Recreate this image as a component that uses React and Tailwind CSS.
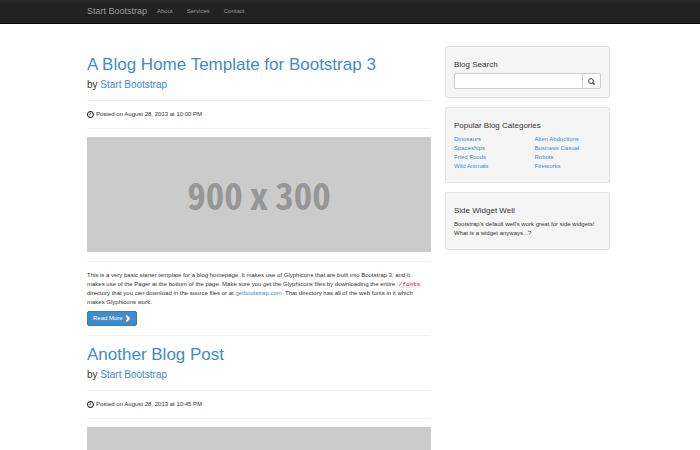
import React from "react";

const categories = [
  ["Dinosaurs", "Spaceships", "Fried Foods", "Wild Animals"],
  ["Alien Abductions", "Business Casual", "Robots", "Fireworks"],
];

function ClockIcon() {
  return (
    <svg viewBox="0 0 14 14" className="mr-0.5 size-[7px] shrink-0 fill-none stroke-[#222]" aria-hidden="true">
      <circle cx="7" cy="7" r="5.9" strokeWidth="2.1" />
      <path d="M7.2 3v4.4H4.4" strokeWidth="1.4" />
    </svg>
  );
}

function SearchIcon() {
  return (
    <svg viewBox="0 0 14 14" className="size-[7px] fill-none stroke-[#333]" aria-hidden="true">
      <circle cx="6" cy="6" r="4.8" strokeWidth="1.9" />
      <path d="M9.4 9.4l3.8 3.8" strokeWidth="2.6" />
    </svg>
  );
}

function ChevronIcon() {
  return (
    <svg viewBox="0 0 14 14" className="size-[7px] fill-white" aria-hidden="true">
      <path d="M3.2 2.8L5.8.2 12.4 7l-6.6 6.8-2.6-2.6L7.2 7z" />
    </svg>
  );
}

function Rule() {
  return <hr className="border-t border-[#f1f1f1]" />;
}

function Post({ title, time, children }) {
  return (
    <article>
      <h1 className="text-[17px] leading-[18px] text-[#428bca]">
        <a href="#post">{title}</a>
      </h1>
      <p className="mt-1 mb-[9px] text-[10px] leading-[13px]">
        by <a href="#author" className="text-[#428bca]">Start Bootstrap</a>
      </p>
      <Rule />
      <p className="my-[9px] flex items-center leading-[9px]">
        <ClockIcon />
        Posted on August 28, 2013 at {time}
      </p>
      <Rule />
      {children}
    </article>
  );
}

function Well({ title, className, children }) {
  return (
    <section className={`rounded-xs border border-[#e3e3e3] bg-[#f5f5f5] px-2 ${className}`}>
      <h4 className="text-[8px] leading-[9px]">{title}</h4>
      {children}
    </section>
  );
}

export default function App() {
  return (
    <div className="min-h-screen bg-white font-['Liberation_Sans',Arial,sans-serif] text-[6px] leading-[9px] text-[#333]">
      <nav className="border-b border-[#080808] bg-linear-to-b from-[#2c2c2c] to-[#222] to-20% pr-[3px] text-[#999]">
        <div className="mx-auto flex h-[23px] max-w-[523px] items-center">
          <a href="#home" className="mr-[10px] text-[9px]">Start Bootstrap</a>
          <div className="flex gap-[14px]">
            <a href="#about">About</a>
            <a href="#services">Services</a>
            <a href="#contact">Contact</a>
          </div>
        </div>
      </nav>
      <div className="pr-[3px]">
        <div className="mx-auto grid max-w-[523px] grid-cols-[344fr_165fr] items-start gap-[14px] pt-[22px]">
          <main className="min-w-0 pt-[10px]">
            <Post title="A Blog Home Template for Bootstrap 3" time="10:00 PM">
              <div className="mt-2 mb-[9px] flex aspect-[3/1] items-center justify-center gap-[7px] bg-[#cbcbcb] font-['Noto_Sans_CJK_JP',sans-serif] text-[37px] font-bold leading-none text-[#969696] [font-feature-settings:'hwid']">
                <span>900</span>
                <span>x</span>
                <span>300</span>
              </div>
              <Rule />
              <p className="mt-[9px] mb-1">
                This is a very basic starter template for a blog homepage. It makes use of Glyphicons that are built into Bootstrap 3, and it<br />
                makes use of the Pager at the bottom of the page. Make sure you get the Glyphicons files by downloading the entire{" "}
                <code className="rounded-xs bg-[#f9f2f4] px-0.5 font-['Liberation_Mono',monospace] text-[#c7254e]">/fonts</code><br />
                directory that you can download in the source files or at{" "}
                <a href="#bootstrap" className="text-[#428bca]">getbootstrap.com</a>. That directory has all of the web fonts in it which<br />
                makes Glyphicons work.
              </p>
              <button type="button" className="mb-[9px] flex h-[15px] items-center gap-px rounded-xs border border-[#357ebd] bg-[#428bca] px-[5px] text-white">
                Read More <ChevronIcon />
              </button>
              <Rule />
            </Post>
            <div className="pt-[10px]">
              <Post title="Another Blog Post" time="10:45 PM">
                <div className="mt-2 h-[23px] bg-[#cbcbcb]" />
              </Post>
            </div>
          </main>
          <aside className="flex min-w-0 flex-col gap-[9px]">
            <Well title="Blog Search" className="pt-[13px] pb-2">
              <form className="mt-1 flex h-4" onSubmit={(e) => e.preventDefault()}>
                <input type="text" aria-label="Blog Search" className="min-w-0 flex-1 rounded-l-xs border border-[#ccc] bg-white px-1" />
                <button type="submit" aria-label="Search" className="-ml-px flex w-[19px] items-center justify-center rounded-r-xs border border-[#ccc] bg-white">
                  <SearchIcon />
                </button>
              </form>
            </Well>
            <Well title="Popular Blog Categories" className="pt-[13px] pb-[11px]">
              <div className="mt-[5px] grid grid-cols-2 gap-x-[14px]">
                {categories.map((names) => (
                  <ul key={names[0]}>
                    {names.map((name) => (
                      <li key={name}>
                        <a href="#category" className="whitespace-nowrap text-[#428bca]">{name}</a>
                      </li>
                    ))}
                  </ul>
                ))}
              </div>
            </Well>
            <Well title="Side Widget Well" className="pt-[13px] pb-[11px]">
              <p className="mt-[5px]">
                Bootstrap's default well's work great for side widgets!<br />
                What is a widget anyways...?
              </p>
            </Well>
          </aside>
        </div>
      </div>
    </div>
  );
}
